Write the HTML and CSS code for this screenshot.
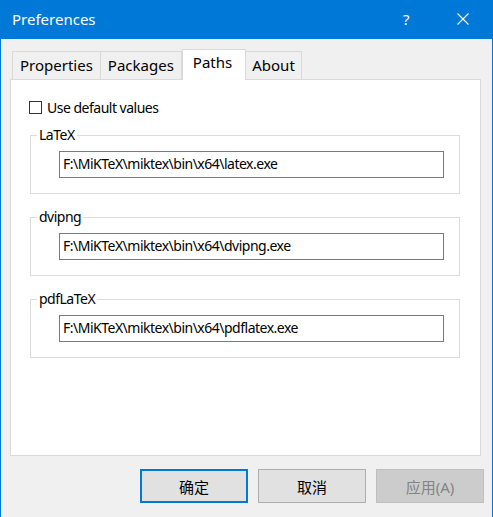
FILE: index.html
```html
<!DOCTYPE html>
<html>
<head>
<meta charset="utf-8">
<link rel="stylesheet" href="styles.css">
</head>
<body>
<div class="window">
  <div class="titlebar">
    <span class="title">Preferences</span>
    <span class="help">?</span>
    <span class="close"><svg width="12" height="12" viewBox="0 0 12 12"><path d="M0.5 0.5 L11.5 11.5 M11.5 0.5 L0.5 11.5" stroke="#fff" stroke-width="1.1" fill="none"/></svg></span>
  </div>
  <div class="body">
    <div class="tabs">
      <div class="tab">Properties</div>
      <div class="tab">Packages</div>
      <div class="tab active">Paths</div>
      <div class="tab last">About</div>
    </div>
    <div class="panel">
      <label class="check"><span class="box"></span><span>Use default values</span></label>
      <fieldset class="group">
        <legend>LaTeX</legend>
        <div class="input">F:\MiKTeX\miktex\bin\x64\latex.exe</div>
      </fieldset>
      <fieldset class="group">
        <legend>dvipng</legend>
        <div class="input">F:\MiKTeX\miktex\bin\x64\dvipng.exe</div>
      </fieldset>
      <fieldset class="group">
        <legend>pdfLaTeX</legend>
        <div class="input">F:\MiKTeX\miktex\bin\x64\pdflatex.exe</div>
      </fieldset>
    </div>
    <div class="buttons">
      <div class="btn default">确定</div>
      <div class="btn">取消</div>
      <div class="btn disabled">应用(A)</div>
    </div>
  </div>
</div>
</body>
</html>
```
FILE: styles.css
```css
* { box-sizing: border-box; }
html, body { margin: 0; padding: 0; }
body {
  font-family: "Noto Sans", "Noto Sans CJK SC", sans-serif;
  font-size: 14px;
  color: #000;
  background: #fff;
}
.window {
  width: 493px;
  height: 517px;
  background: #f0f0f0;
  display: flex;
  flex-direction: column;
}
.titlebar {
  height: 39px;
  background: #0078d7;
  color: #fff;
  display: flex;
  align-items: center;
  padding-left: 12px;
}
.title { font-size: 15px; flex: 1; margin-top: -2px; }
.help { font-size: 15px; width: 54px; margin-top: -2px; }
.close { width: 36px; display: flex; align-items: center; margin-top: -1px; }
.close svg { display: block; }
.body {
  flex: 1;
  border-left: 1px solid #0078d7;
  border-right: 1px solid #0078d7;
  padding: 11px 8px 0 9px;
  display: flex;
  flex-direction: column;
}
.tabs {
  display: flex;
  align-items: flex-end;
  margin-left: 2px;
  height: 30px;
  position: relative;
  z-index: 1;
  margin-bottom: -1px;
  font-size: 15px;
}
.tab {
  height: 28px;
  border: 1px solid #d9d9d9;
  border-bottom: none;
  background: #f0f0f0;
  padding: 0 7px;
  line-height: 26px;
  margin-bottom: 1px;
}
.tab + .tab { border-left: none; }
.tab.last { padding: 0 6px; }
.tab.active {
  height: 31px;
  background: #fff;
  border-left: 1px solid #d9d9d9;
  margin-bottom: 0;
  line-height: 24px;
  padding: 0 13px 0 10px;
}
.panel {
  height: 377px;
  margin-right: 3px;
  background: #fff;
  border: 1px solid #d9d9d9;
  padding: 20px 20px 0 18px;
  display: flex;
  flex-direction: column;
  letter-spacing: -0.5px;
}
.check {
  display: flex;
  align-items: center;
  height: 14px;
  gap: 5px;
}
.box {
  width: 13px;
  height: 13px;
  border: 1px solid #333;
  background: #fff;
}
.group {
  margin: 13px 0 0 1px;
  border: 1px solid #dcdcdc;
  padding: 8px 15px 15px 28px;
}
.group + .group { margin-top: 15px; }
.group legend {
  padding: 0 2px 0 2px;
  margin-left: -22px;
  line-height: 16px;
}
.input {
  height: 27px;
  border: 1px solid #7a7a7a;
  background: #fff;
  padding-left: 3px;
  line-height: 24px;
}
.buttons {
  display: flex;
  justify-content: flex-end;
  gap: 10px;
  margin-top: 13px;
}
.btn {
  width: 108px;
  height: 34px;
  background: #e1e1e1;
  border: 1px solid #adadad;
  display: flex;
  align-items: center;
  justify-content: center;
  font-size: 15px;
}
.btn.default { border: 2px solid #0078d7; }
.btn.disabled { background: #cccccc; border-color: #bfbfbf; color: #838383; }
```
